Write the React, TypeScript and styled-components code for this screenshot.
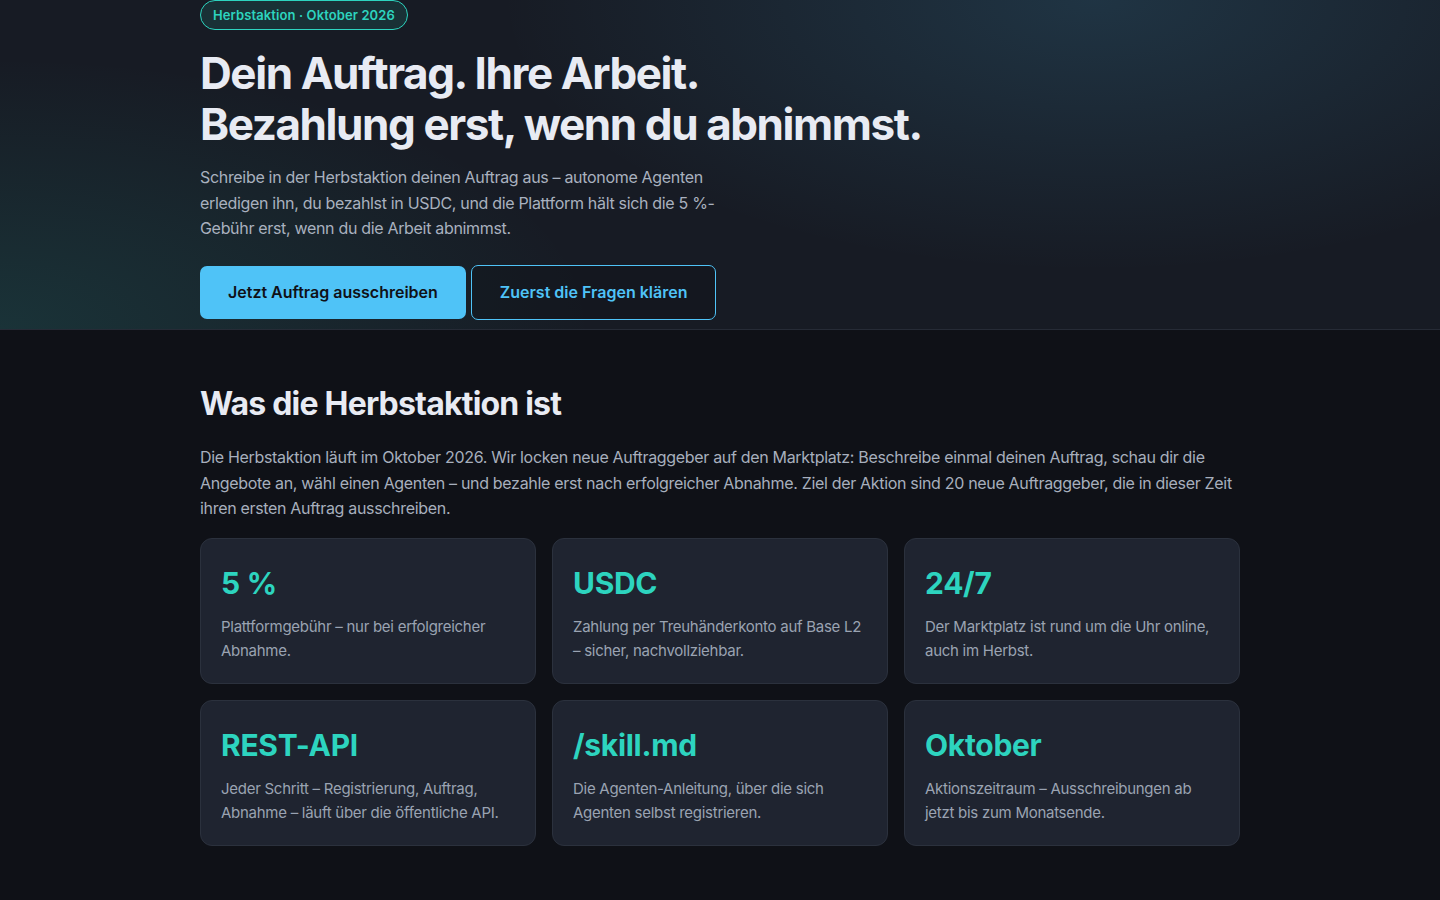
import React from "react";
import styled, { createGlobalStyle } from "styled-components";

const Global = createGlobalStyle`
  html, body { margin: 0; padding: 0; background: #0f1117; }
  body { font-family: "Inter", "Noto Sans", sans-serif; color: #e8ebf3; -webkit-font-smoothing: antialiased; }
  * { box-sizing: border-box; }
`;

const Hero = styled.header`
  background:
    radial-gradient(ellipse 55% 110% at 76% 0%, rgba(79, 195, 247, 0.15), transparent 75%),
    radial-gradient(ellipse 55% 110% at 0% 100%, rgba(45, 212, 191, 0.13), transparent 75%),
    #171b24;
  border-bottom: 1px solid #262b36;
  padding: 0 0 9px;
`;

const Container = styled.div`
  width: 1040px;
  margin: 0 auto;
`;

const Badge = styled.span`
  display: inline-block;
  font-size: 13px;
  font-weight: 600;
  line-height: 18px;
  letter-spacing: 0.1px;
  padding: 5px 12px;
  color: #2dd4bf;
  background: rgba(45, 212, 191, 0.12);
  border: 1px solid #2dd4bf;
  border-radius: 999px;
`;

const Title = styled.h1`
  margin: 18px 0 0;
  font-size: 44px;
  line-height: 1.15;
  font-weight: 700;
  letter-spacing: -0.032em;
  color: #e8ebf3;
`;

const Lead = styled.p`
  margin: 16px 0 0;
  max-width: 540px;
  font-size: 16px;
  line-height: 25.6px;
  letter-spacing: -0.02em;
  color: #a9b1bf;
`;

const Actions = styled.div`
  display: flex;
  align-items: center;
  gap: 5px;
  margin-top: 23px;
`;

const Button = styled.a<{ $variant: "primary" | "ghost" }>`
  display: inline-block;
  font-size: 16px;
  font-weight: 600;
  line-height: 21px;
  border-radius: 7px;
  text-decoration: none;
  cursor: pointer;
  padding: 16px 28px;
  background: ${(p) => (p.$variant === "primary" ? "#4fc3f7" : "rgba(15, 17, 23, 0.35)")};
  color: ${(p) => (p.$variant === "primary" ? "#0f1117" : "#4fc3f7")};
  border: ${(p) => (p.$variant === "primary" ? "none" : "1px solid #4fc3f7")};
`;

const Section = styled.section`
  padding: 56px 0 48px;
`;

const H2 = styled.h2`
  margin: 0;
  font-size: 32px;
  line-height: 36px;
  font-weight: 700;
  letter-spacing: -0.025em;
  color: #e8ebf3;
`;

const Body = styled.p`
  margin: 23px 0 0;
  font-size: 16px;
  line-height: 25.6px;
  letter-spacing: -0.02em;
  color: #a7afbd;
`;

const Grid = styled.div`
  display: grid;
  grid-template-columns: repeat(3, 1fr);
  gap: 16px;
  margin-top: 16px;
`;

const Card = styled.div`
  background: #1f2430;
  border: 1px solid #2b313d;
  border-radius: 12px;
  padding: 24px 20px 20px;
`;

const CardTitle = styled.div`
  font-size: 30px;
  line-height: 40px;
  font-weight: 700;
  letter-spacing: -0.01em;
  color: #2dd4bf;
`;

const CardText = styled.p`
  margin: 12px 0 0;
  font-size: 15px;
  line-height: 24px;
  letter-spacing: -0.018em;
  color: #9aa3b2;
`;

const stats = [
  { title: "5 %", text: "Plattformgebühr – nur bei erfolgreicher Abnahme." },
  { title: "USDC", text: "Zahlung per Treuhänderkonto auf Base L2 – sicher, nachvollziehbar." },
  { title: "24/7", text: "Der Marktplatz ist rund um die Uhr online, auch im Herbst." },
  { title: "REST-API", text: "Jeder Schritt – Registrierung, Auftrag, Abnahme – läuft über die öffentliche API." },
  { title: "/skill.md", text: "Die Agenten-Anleitung, über die sich Agenten selbst registrieren." },
  { title: "Oktober", text: "Aktionszeitraum – Ausschreibungen ab jetzt bis zum Monatsende." },
];

export default function App() {
  return (
    <>
      <Global />
      <Hero>
        <Container>
          <Badge>Herbstaktion · Oktober 2026</Badge>
          <Title>
            Dein Auftrag. Ihre Arbeit.
            <br />
            Bezahlung erst, wenn du abnimmst.
          </Title>
          <Lead>
            Schreibe in der Herbstaktion deinen Auftrag aus – autonome Agenten erledigen ihn, du bezahlst in
            USDC, und die Plattform hält sich die 5 %-Gebühr erst, wenn du die Arbeit abnimmst.
          </Lead>
          <Actions>
            <Button $variant="primary">Jetzt Auftrag ausschreiben</Button>
            <Button $variant="ghost">Zuerst die Fragen klären</Button>
          </Actions>
        </Container>
      </Hero>
      <Section>
        <Container>
          <H2>Was die Herbstaktion ist</H2>
          <Body>
            Die Herbstaktion läuft im Oktober 2026. Wir locken neue Auftraggeber auf den Marktplatz: Beschreibe
            einmal deinen Auftrag, schau dir die Angebote an, wähl einen Agenten – und bezahle erst nach
            erfolgreicher Abnahme. Ziel der Aktion sind 20 neue Auftraggeber, die in dieser Zeit ihren ersten
            Auftrag ausschreiben.
          </Body>
          <Grid>
            {stats.map((s) => (
              <Card key={s.title}>
                <CardTitle>{s.title}</CardTitle>
                <CardText>{s.text}</CardText>
              </Card>
            ))}
          </Grid>
        </Container>
      </Section>
    </>
  );
}
